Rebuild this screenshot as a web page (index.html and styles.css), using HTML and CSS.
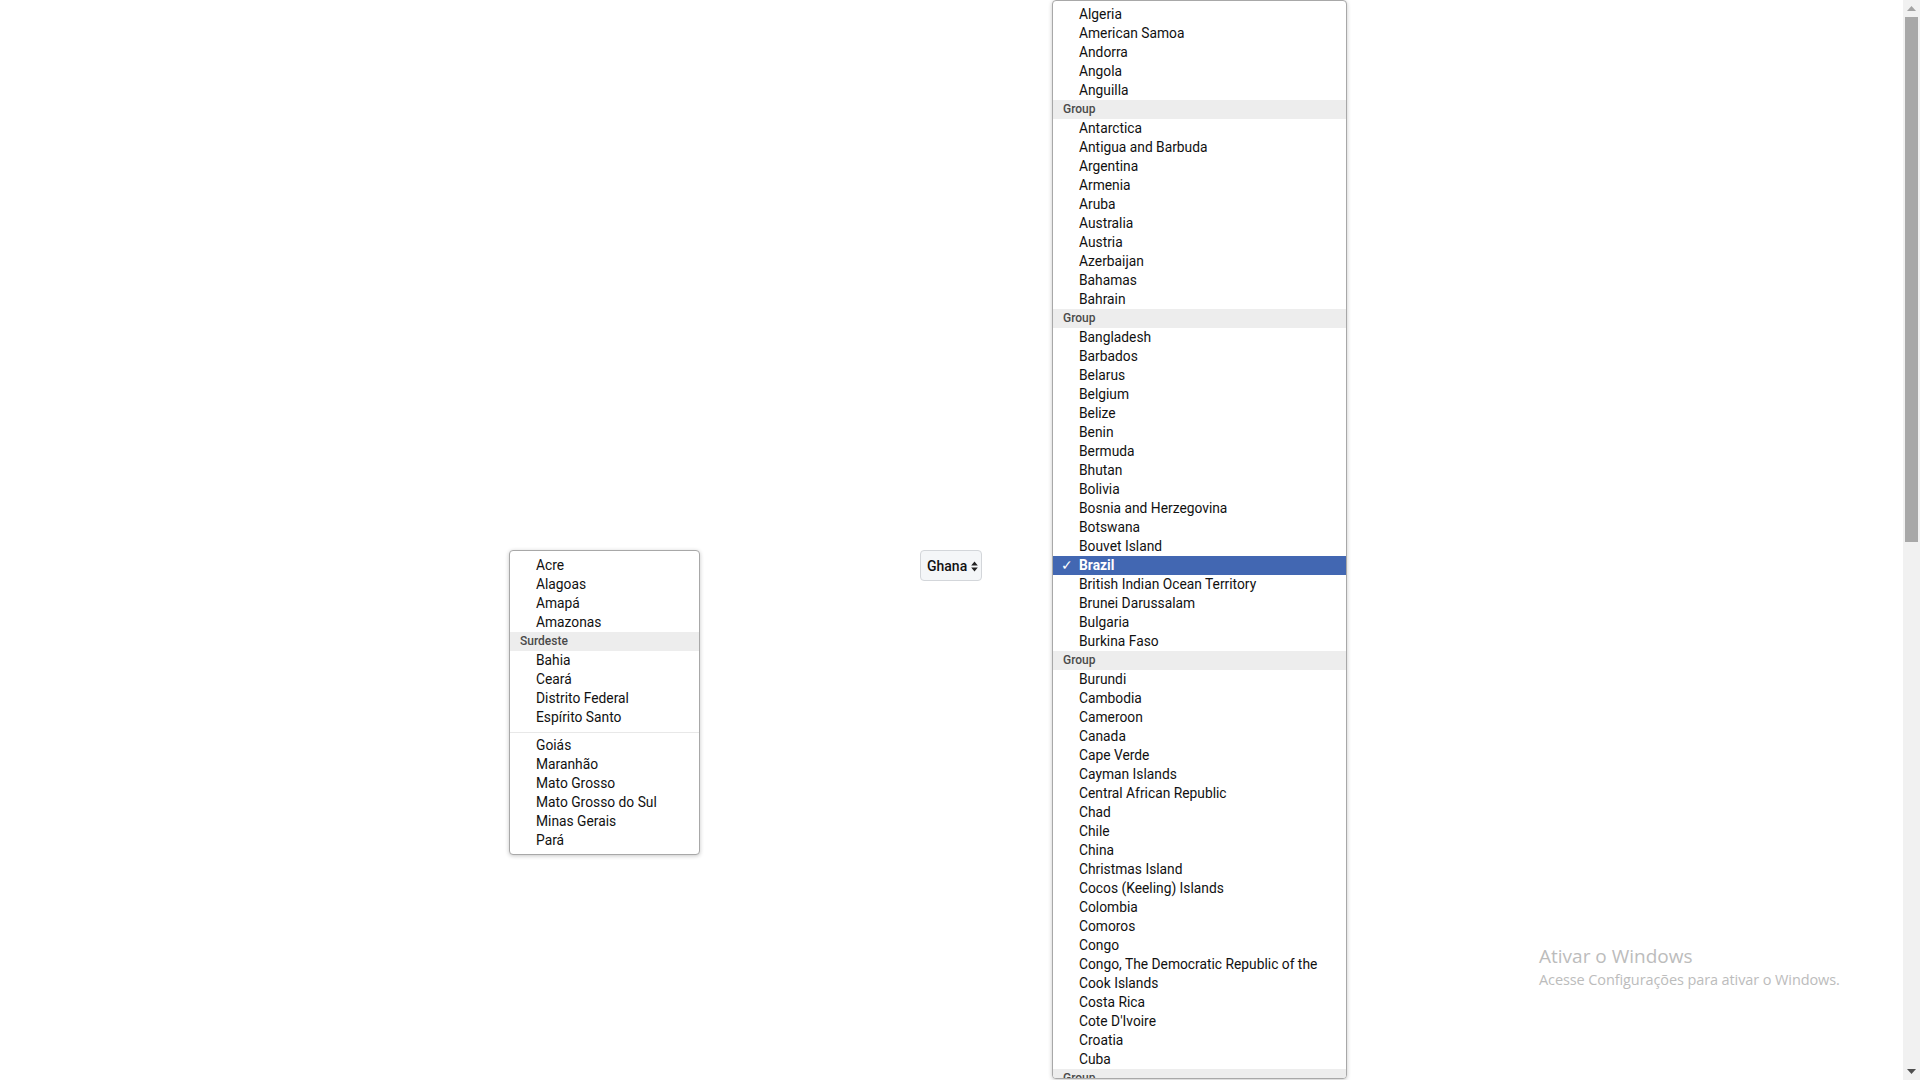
FILE: index.html
```html
<!DOCTYPE html>
<html>
<head>
<meta charset="utf-8">
<link rel="stylesheet" href="styles.css">
</head>
<body>
<div class="screen">
  <main class="page">
    <div class="anchor-row">
      <button class="select-btn">Ghana
        <svg class="updown" width="7" height="11" viewBox="0 0 7 11"><path d="M3.5 0.5 L6.8 4.6 H0.2 Z M3.5 10.5 L6.8 6.4 H0.2 Z" fill="#222"/></svg>
      </button>
    </div>

    <div class="popup popup-left">
      <div class="opt">Acre</div>
      <div class="opt">Alagoas</div>
      <div class="opt">Amapá</div>
      <div class="opt">Amazonas</div>
      <div class="grp">Surdeste</div>
      <div class="opt">Bahia</div>
      <div class="opt">Ceará</div>
      <div class="opt">Distrito Federal</div>
      <div class="opt">Espírito Santo</div>
      <div class="sep"></div>
      <div class="opt">Goiás</div>
      <div class="opt">Maranhão</div>
      <div class="opt">Mato Grosso</div>
      <div class="opt">Mato Grosso do Sul</div>
      <div class="opt">Minas Gerais</div>
      <div class="opt">Pará</div>
    </div>

    <div class="popup popup-right">
      <div class="opt">Algeria</div>
      <div class="opt">American Samoa</div>
      <div class="opt">Andorra</div>
      <div class="opt">Angola</div>
      <div class="opt">Anguilla</div>
      <div class="grp">Group</div>
      <div class="opt">Antarctica</div>
      <div class="opt">Antigua and Barbuda</div>
      <div class="opt">Argentina</div>
      <div class="opt">Armenia</div>
      <div class="opt">Aruba</div>
      <div class="opt">Australia</div>
      <div class="opt">Austria</div>
      <div class="opt">Azerbaijan</div>
      <div class="opt">Bahamas</div>
      <div class="opt">Bahrain</div>
      <div class="grp">Group</div>
      <div class="opt">Bangladesh</div>
      <div class="opt">Barbados</div>
      <div class="opt">Belarus</div>
      <div class="opt">Belgium</div>
      <div class="opt">Belize</div>
      <div class="opt">Benin</div>
      <div class="opt">Bermuda</div>
      <div class="opt">Bhutan</div>
      <div class="opt">Bolivia</div>
      <div class="opt">Bosnia and Herzegovina</div>
      <div class="opt">Botswana</div>
      <div class="opt">Bouvet Island</div>
      <div class="opt selected"><span class="check">✓</span>Brazil</div>
      <div class="opt">British Indian Ocean Territory</div>
      <div class="opt">Brunei Darussalam</div>
      <div class="opt">Bulgaria</div>
      <div class="opt">Burkina Faso</div>
      <div class="grp">Group</div>
      <div class="opt">Burundi</div>
      <div class="opt">Cambodia</div>
      <div class="opt">Cameroon</div>
      <div class="opt">Canada</div>
      <div class="opt">Cape Verde</div>
      <div class="opt">Cayman Islands</div>
      <div class="opt">Central African Republic</div>
      <div class="opt">Chad</div>
      <div class="opt">Chile</div>
      <div class="opt">China</div>
      <div class="opt">Christmas Island</div>
      <div class="opt">Cocos (Keeling) Islands</div>
      <div class="opt">Colombia</div>
      <div class="opt">Comoros</div>
      <div class="opt">Congo</div>
      <div class="opt">Congo, The Democratic Republic of the</div>
      <div class="opt">Cook Islands</div>
      <div class="opt">Costa Rica</div>
      <div class="opt">Cote D'Ivoire</div>
      <div class="opt">Croatia</div>
      <div class="opt">Cuba</div>
      <div class="grp">Group</div>
    </div>

    <div class="watermark">
      <div class="wm-title">Ativar o Windows</div>
      <div class="wm-sub">Acesse Configurações para ativar o Windows.</div>
    </div>
  </main>

  <div class="scrollbar">
    <div class="sb-btn"><svg width="9" height="5" viewBox="0 0 9 5"><path d="M4.5 0 L9 5 H0 Z" fill="#a3a3a3"/></svg></div>
    <div class="sb-track"><div class="sb-thumb"></div></div>
    <div class="sb-btn"><svg width="9" height="5" viewBox="0 0 9 5"><path d="M0 0 H9 L4.5 5 Z" fill="#505050"/></svg></div>
  </div>
</div>
</body>
</html>
```

FILE: styles.css
```css
html, body {
  margin: 0;
  padding: 0;
  background: #fff;
  overflow: hidden;
}

.screen {
  display: flex;
  width: 1920px;
  height: 1080px;
  font-family: Roboto, "Liberation Sans", sans-serif;
  font-size: 13.8px;
  color: #111;
}

.page {
  flex: 1;
  position: relative;
  height: 1080px;
  overflow: hidden;
}

.anchor-row {
  display: flex;
  padding: 550px 0 0 920px;
}

.select-btn {
  display: flex;
  align-items: center;
  gap: 4px;
  box-sizing: border-box;
  width: 62px;
  height: 31px;
  padding: 0 0 0 6px;
  border: 1px solid #d3d6da;
  border-radius: 4px;
  background: #f4f6f8;
  font-family: Roboto, "Liberation Sans", sans-serif;
  font-size: 14px;
  font-weight: 500;
  color: #111;
}

.updown {
  display: block;
  margin-top: 1px;
}

.popup {
  position: absolute;
  box-sizing: border-box;
  background: #fff;
  border: 1px solid #a8a8a8;
  border-radius: 4px;
  box-shadow: 0 1px 4px rgba(0, 0, 0, 0.22);
  overflow: hidden;
}

.popup-left {
  left: 509px;
  top: 550px;
  width: 191px;
  height: 305px;
  padding: 5px 0 4px;
}

.popup-right {
  left: 1052px;
  top: 0;
  width: 295px;
  height: 1079px;
  padding: 4px 0 0;
}

.opt {
  position: relative;
  height: 19px;
  line-height: 19px;
  padding-left: 26px;
  white-space: nowrap;
  color: #111;
}

.grp {
  height: 19px;
  line-height: 19px;
  padding-left: 10px;
  background: #ededed;
  font-size: 12px;
  font-weight: 500;
  color: #4a4a4a;
}

.sep {
  height: 1px;
  margin: 5px 0 3px;
  background: #e8e8e8;
}

.selected {
  background: #4267b2;
  color: #fff;
  font-weight: 700;
}

.check {
  position: absolute;
  left: 8px;
  top: 0;
  font-weight: 400;
  font-size: 14px;
}

.watermark {
  position: absolute;
  left: 1539px;
  top: 944px;
  font-family: "Open Sans", "Noto Sans", sans-serif;
  color: #bcbcbc;
}

.wm-title {
  font-size: 19px;
  line-height: 24px;
}

.wm-sub {
  font-size: 14.5px;
  line-height: 20px;
  margin-top: 2px;
  letter-spacing: -0.1px;
}

.scrollbar {
  display: flex;
  flex-direction: column;
  width: 17px;
  height: 1080px;
  background: #f1f1f1;
}

.sb-btn {
  height: 17px;
  display: flex;
  align-items: center;
  justify-content: center;
}

.sb-track {
  flex: 1;
  padding: 0 2px;
}

.sb-thumb {
  height: 525px;
  background: #a8a8a8;
}
```
